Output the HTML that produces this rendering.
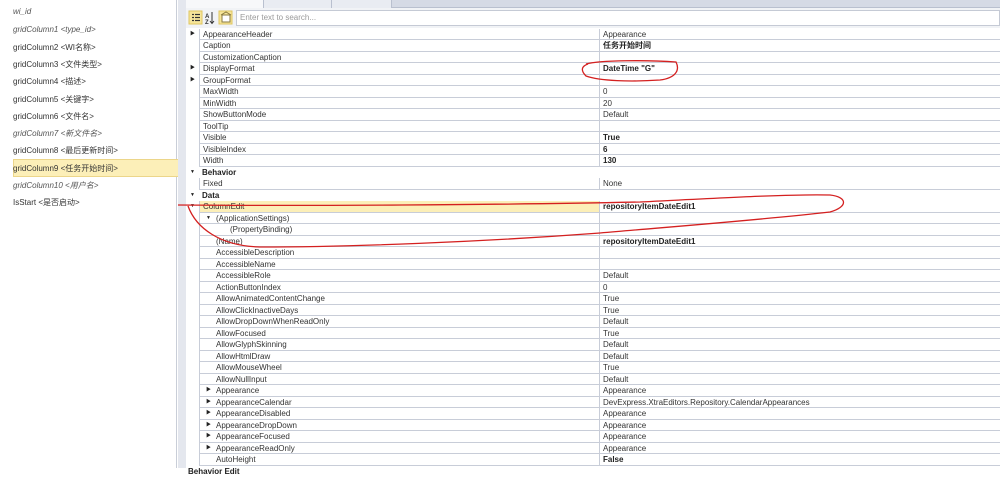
<!DOCTYPE html>
<html><head><meta charset="utf-8"><style>
*{margin:0;padding:0;box-sizing:border-box}
body{width:1000px;height:468px;overflow:hidden;background:#fff;font-family:"Liberation Sans","Noto Sans CJK SC",sans-serif;font-size:8px;color:#333;position:relative}
#left{position:absolute;left:0;top:0;width:177px;height:468px;background:#fff;border-right:1px solid #c9ced8}
#left div{position:absolute;left:13px;font-size:8px;color:#333;white-space:nowrap}
#left .i{font-style:italic;color:#555}
#sel{position:absolute;left:5px;top:159px;width:171px;height:18px;background:#fcefb8;border:1px solid #ecd68a}
#split{position:absolute;left:178px;top:0;width:8px;height:468px;background:#e4e7ee}
#tabs{position:absolute;left:186px;top:0;width:814px;height:8px;background:#d5dae5;border-bottom:1px solid #b9c0cf}
.tab{position:absolute;top:0;height:8px;border-right:1px solid #b9c0cf;background:#e9ecf2}
#tb{position:absolute;left:186px;top:8px;width:814px;height:20px;background:#f1f3f6}
#search{position:absolute;left:236px;top:10px;width:764px;height:16px;background:#fff;border:1px solid #c5cad5;color:#9a9a9a;padding-left:3px;line-height:14px;font-size:8px}
#grid{position:absolute;left:186px;top:28.5px;width:814px}
.r{height:11.5px;position:relative;white-space:nowrap;line-height:11px}
.n{position:absolute;left:13px;right:401px;top:0;height:11.5px;border-left:1px solid #c8cdd8;border-bottom:1px solid #c8cdd8;padding-left:3px}
.v{position:absolute;left:413px;right:0;top:0;height:11.5px;border-left:1px solid #c8cdd8;border-bottom:1px solid #c8cdd8;padding-left:3px}
.b{font-weight:bold;color:#222}
.c .cat{position:absolute;left:16px;font-weight:bold;color:#222}
.a{position:absolute;left:4px;top:0;font-size:5px;color:#222}
.s{position:absolute;left:6px;font-size:5px;color:#222}
.l2 .n{padding-left:16px}
.l3 .n{padding-left:30px}
.hl .n{background:#fcefb8}
</style></head><body>
<div id="left">
<div id="sel"></div>
<div class="i" style="top:7px">wi_id</div>
<div class="i" style="top:24.5px">gridColumn1 &lt;type_id&gt;</div>
<div style="top:41.5px">gridColumn2 &lt;WI名称&gt;</div>
<div style="top:59px">gridColumn3 &lt;文件类型&gt;</div>
<div style="top:76px">gridColumn4 &lt;描述&gt;</div>
<div style="top:93.5px">gridColumn5 &lt;关键字&gt;</div>
<div style="top:110.5px">gridColumn6 &lt;文件名&gt;</div>
<div class="i" style="top:128px">gridColumn7 &lt;新文件名&gt;</div>
<div style="top:145px">gridColumn8 &lt;最后更新时间&gt;</div>
<div style="top:162.5px">gridColumn9 &lt;任务开始时间&gt;</div>
<div class="i" style="top:179.5px">gridColumn10 &lt;用户名&gt;</div>
<div style="top:197px">IsStart &lt;是否启动&gt;</div>
</div>
<div id="split"></div>
<div id="tabs"><div class="tab" style="left:0;width:78px;background:#f7f8fa"></div><div class="tab" style="left:78px;width:68px"></div><div class="tab" style="left:146px;width:60px"></div></div>
<div id="tb"></div>
<svg style="position:absolute;left:186px;top:8px" width="50" height="20">
<rect x="3" y="3" width="13" height="13" fill="#f6e59a" stroke="#e0c660"/>
<g stroke="#333" stroke-width="1.2"><line x1="6" y1="6.5" x2="8" y2="6.5"/><line x1="9" y1="6.5" x2="14" y2="6.5"/><line x1="6" y1="9.5" x2="8" y2="9.5"/><line x1="9" y1="9.5" x2="14" y2="9.5"/><line x1="6" y1="12.5" x2="8" y2="12.5"/><line x1="9" y1="12.5" x2="14" y2="12.5"/></g>
<text x="19" y="10" font-size="6" font-weight="bold" fill="#333" font-family="Liberation Sans">A</text>
<text x="19" y="16" font-size="6" font-weight="bold" fill="#333" font-family="Liberation Sans">Z</text>
<path d="M26 4V15M24 13L26 15.5L28 13" stroke="#333" fill="none"/>
<rect x="33" y="3" width="13" height="13" fill="#f6e59a" stroke="#e0c660"/>
<rect x="36" y="7" width="8" height="7" fill="#fff" stroke="#8a7a40"/><path d="M35 7L40 4L45 7" stroke="#8a7a40" fill="none"/>
</svg>
<div id="search">Enter text to search...</div>
<div id="grid">
<div class="r"><span class="a">▶</span><div class="n">AppearanceHeader</div><div class="v">Appearance</div></div>
<div class="r"><div class="n">Caption</div><div class="v b">任务开始时间</div></div>
<div class="r"><div class="n">CustomizationCaption</div><div class="v"></div></div>
<div class="r"><span class="a">▶</span><div class="n">DisplayFormat</div><div class="v b">DateTime "G"</div></div>
<div class="r"><span class="a">▶</span><div class="n">GroupFormat</div><div class="v"></div></div>
<div class="r"><div class="n">MaxWidth</div><div class="v">0</div></div>
<div class="r"><div class="n">MinWidth</div><div class="v">20</div></div>
<div class="r"><div class="n">ShowButtonMode</div><div class="v">Default</div></div>
<div class="r"><div class="n">ToolTip</div><div class="v"></div></div>
<div class="r"><div class="n">Visible</div><div class="v b">True</div></div>
<div class="r"><div class="n">VisibleIndex</div><div class="v b">6</div></div>
<div class="r"><div class="n">Width</div><div class="v b">130</div></div>
<div class="r c"><span class="a">▼</span><span class="cat">Behavior</span></div>
<div class="r"><div class="n">Fixed</div><div class="v">None</div></div>
<div class="r c"><span class="a">▼</span><span class="cat">Data</span></div>
<div class="r hl"><span class="a">▼</span><div class="n">ColumnEdit</div><div class="v b">repositoryItemDateEdit1</div></div>
<div class="r l2"><div class="n"><span class="s">▼</span>(ApplicationSettings)</div><div class="v"></div></div>
<div class="r l3"><div class="n">(PropertyBinding)</div><div class="v"></div></div>
<div class="r l2"><div class="n">(Name)</div><div class="v b">repositoryItemDateEdit1</div></div>
<div class="r l2"><div class="n">AccessibleDescription</div><div class="v"></div></div>
<div class="r l2"><div class="n">AccessibleName</div><div class="v"></div></div>
<div class="r l2"><div class="n">AccessibleRole</div><div class="v">Default</div></div>
<div class="r l2"><div class="n">ActionButtonIndex</div><div class="v">0</div></div>
<div class="r l2"><div class="n">AllowAnimatedContentChange</div><div class="v">True</div></div>
<div class="r l2"><div class="n">AllowClickInactiveDays</div><div class="v">True</div></div>
<div class="r l2"><div class="n">AllowDropDownWhenReadOnly</div><div class="v">Default</div></div>
<div class="r l2"><div class="n">AllowFocused</div><div class="v">True</div></div>
<div class="r l2"><div class="n">AllowGlyphSkinning</div><div class="v">Default</div></div>
<div class="r l2"><div class="n">AllowHtmlDraw</div><div class="v">Default</div></div>
<div class="r l2"><div class="n">AllowMouseWheel</div><div class="v">True</div></div>
<div class="r l2"><div class="n">AllowNullInput</div><div class="v">Default</div></div>
<div class="r l2"><div class="n"><span class="s">▶</span>Appearance</div><div class="v">Appearance</div></div>
<div class="r l2"><div class="n"><span class="s">▶</span>AppearanceCalendar</div><div class="v">DevExpress.XtraEditors.Repository.CalendarAppearances</div></div>
<div class="r l2"><div class="n"><span class="s">▶</span>AppearanceDisabled</div><div class="v">Appearance</div></div>
<div class="r l2"><div class="n"><span class="s">▶</span>AppearanceDropDown</div><div class="v">Appearance</div></div>
<div class="r l2"><div class="n"><span class="s">▶</span>AppearanceFocused</div><div class="v">Appearance</div></div>
<div class="r l2"><div class="n"><span class="s">▶</span>AppearanceReadOnly</div><div class="v">Appearance</div></div>
<div class="r l2"><div class="n">AutoHeight</div><div class="v b">False</div></div>
<div class="r c"><span class="cat" style="left:2px">Behavior Edit</span></div>
</div>
<svg style="position:absolute;left:0;top:0" width="1000" height="468" fill="none" stroke="#d42020" stroke-width="1.3">
<path d="M586 64C600 60 650 60 676 62C680 70 676 78 660 80C630 82 600 81 586 76C580 70 582 66 588 64"/>
<path d="M178 205C300 206 500 205 640 202C720 198 790 194 830 195C848 197 848 207 830 212C760 220 680 226 600 233C480 242 350 247 260 247C220 246 196 228 188 206"/>
</svg>
</body></html>
